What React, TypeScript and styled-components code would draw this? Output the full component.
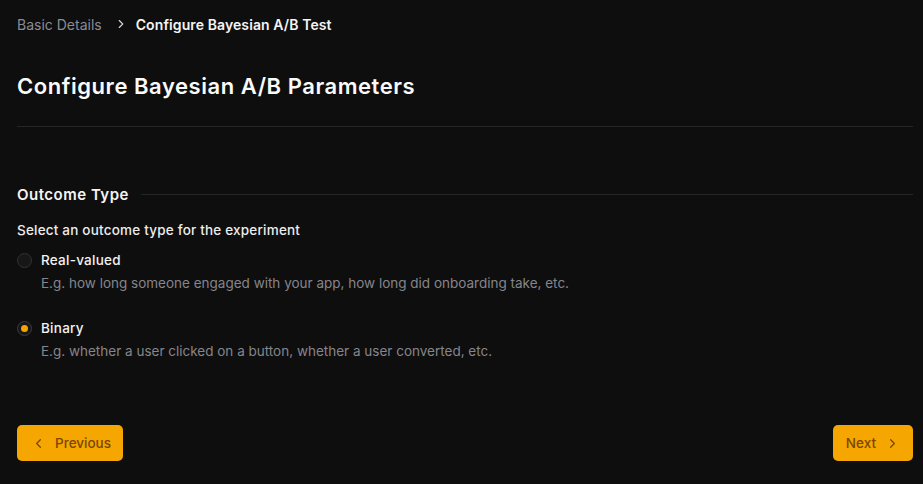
import React, { useState } from 'react';
import styled, { createGlobalStyle } from 'styled-components';
import { ChevronLeft, ChevronRight } from 'lucide-react';

const GlobalStyle = createGlobalStyle`
  html, body {
    margin: 0;
    padding: 0;
    background: #0e0e0e;
    font-family: Inter, "Noto Sans", sans-serif;
    color: #f2f2f2;
  }
`;

const options = [
  {
    id: 'real',
    label: 'Real-valued',
    desc: 'E.g. how long someone engaged with your app, how long did onboarding take, etc.',
  },
  {
    id: 'binary',
    label: 'Binary',
    desc: 'E.g. whether a user clicked on a button, whether a user converted, etc.',
  },
];

const App: React.FC = () => {
  const [outcome, setOutcome] = useState('binary');

  return (
    <>
      <GlobalStyle />
      <StyledPage>
        <StyledBreadcrumb>
          <StyledCrumb>Basic Details</StyledCrumb>
          <StyledCrumbSep>
            <ChevronRight size={14} strokeWidth={2} />
          </StyledCrumbSep>
          <StyledCrumb $current>Configure Bayesian A/B Test</StyledCrumb>
        </StyledBreadcrumb>

        <StyledTitle>Configure Bayesian A/B Parameters</StyledTitle>
        <StyledDivider />

        <StyledSectionHeader>
          <StyledSectionTitle>Outcome Type</StyledSectionTitle>
          <StyledSectionLine />
        </StyledSectionHeader>

        <StyledPrompt>Select an outcome type for the experiment</StyledPrompt>

        <StyledOptions>
          {options.map((o) => (
            <StyledOption key={o.id} onClick={() => setOutcome(o.id)}>
              <StyledOptionRow>
                <StyledRadio $checked={outcome === o.id} />
                <StyledOptionLabel>{o.label}</StyledOptionLabel>
              </StyledOptionRow>
              <StyledOptionDesc>{o.desc}</StyledOptionDesc>
            </StyledOption>
          ))}
        </StyledOptions>

        <StyledActions>
          <StyledButton $side="left">
            <ChevronLeft size={15} strokeWidth={2} />
            <span>Previous</span>
          </StyledButton>
          <StyledButton $side="right">
            <span>Next</span>
            <ChevronRight size={15} strokeWidth={2} />
          </StyledButton>
        </StyledActions>
      </StyledPage>
    </>
  );
};

const StyledPage = styled.div`
  display: flex;
  flex-direction: column;
  padding: 0 10px 0 17px;
  height: 484px;
  box-sizing: border-box;
`;

const StyledBreadcrumb = styled.div`
  display: flex;
  align-items: center;
  height: 48px;
  font-size: 14px;
`;

const StyledCrumb = styled.span<{ $current?: boolean }>`
  color: ${(p) => (p.$current ? '#f4f4f4' : '#8b8b92')};
  font-weight: ${(p) => (p.$current ? 600 : 400)};
  letter-spacing: ${(p) => (p.$current ? '0.1px' : '0')};
`;

const StyledCrumbSep = styled.span`
  display: flex;
  align-items: center;
  color: #d0d0d0;
  margin: 0 8px 0 12px;
`;

const StyledTitle = styled.h1`
  margin: 24px 0 0;
  font-size: 22px;
  line-height: 28px;
  font-weight: 600;
  color: #fafafa;
  letter-spacing: 0.55px;
`;

const StyledDivider = styled.div`
  height: 1px;
  background: #262626;
  margin-top: 26px;
`;

const StyledSectionHeader = styled.div`
  display: flex;
  align-items: center;
  gap: 12px;
  margin-top: 57px;
  height: 20px;
`;

const StyledSectionTitle = styled.h2`
  margin: 0;
  font-size: 15px;
  font-weight: 600;
  color: #f4f4f4;
  letter-spacing: 0.5px;
`;

const StyledSectionLine = styled.div`
  flex: 1;
  height: 1px;
  background: #262626;
`;

const StyledPrompt = styled.div`
  margin-top: 16px;
  font-size: 13.5px;
  line-height: 20px;
  font-weight: 500;
  color: #ececec;
  letter-spacing: 0.2px;
`;

const StyledOptions = styled.div`
  display: flex;
  flex-direction: column;
  gap: 25px;
  margin-top: 10px;
`;

const StyledOption = styled.div`
  display: flex;
  flex-direction: column;
  gap: 3px;
  cursor: pointer;
`;

const StyledOptionRow = styled.div`
  display: flex;
  align-items: center;
  gap: 9px;
  height: 20px;
`;

const StyledRadio = styled.span<{ $checked: boolean }>`
  width: 15px;
  height: 15px;
  box-sizing: border-box;
  border-radius: 50%;
  border: 1px solid ${(p) => (p.$checked ? '#3c3c3c' : '#333')};
  background: #171717;
  display: flex;
  align-items: center;
  justify-content: center;

  &::after {
    content: '';
    width: 7px;
    height: 7px;
    border-radius: 50%;
    background: #f5a300;
    display: ${(p) => (p.$checked ? 'block' : 'none')};
  }
`;

const StyledOptionLabel = styled.span`
  font-size: 13.5px;
  font-weight: 500;
  color: #f2f2f2;
  letter-spacing: 0.25px;
`;

const StyledOptionDesc = styled.div`
  padding-left: 24px;
  font-size: 13.5px;
  line-height: 20px;
  color: #85858c;
`;

const StyledActions = styled.div`
  display: flex;
  justify-content: space-between;
  margin-top: 64px;
`;

const StyledButton = styled.button<{ $side: 'left' | 'right' }>`
  display: flex;
  align-items: center;
  gap: 9px;
  height: 36px;
  padding: ${(p) => (p.$side === 'left' ? '0 12px 0 14px' : '0 13px 0 13px')};
  border: none;
  border-radius: 5px;
  background: #f5a600;
  color: #7a4700;
  font-family: Inter, "Noto Sans", sans-serif;
  font-size: 13.5px;
  font-weight: 500;
  cursor: pointer;
`;

export default App;
